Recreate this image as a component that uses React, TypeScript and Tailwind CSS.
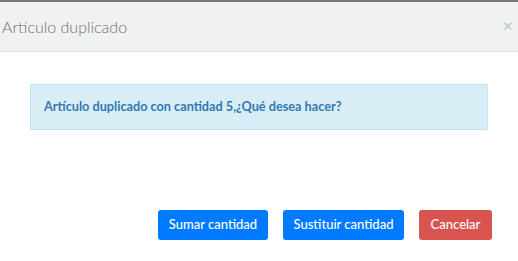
export default function App() {
  return (
    <div className="w-[518px] h-[261px] bg-white font-['Lato',sans-serif] border-t-2 border-[#7a7a7a]">
      <div className="h-[50px] bg-[#f0f1f1] border-b border-[#e2e2e2] flex items-center justify-between pl-[2px] pr-[5px]">
        <h4 className="text-[16px] font-light text-[#707070]">Artículo duplicado</h4>
        <span className="text-[18px] leading-none text-[#b9c4cf] -mt-[4px]">×</span>
      </div>
      <div className="px-[29px] pt-[32px]">
        <div className="h-[46px] bg-[#d9edf7] border border-[#bce8f1] flex items-center pl-[13px] mx-[1px]">
          <p className="text-[12.7px] font-bold text-[#3079b3]">Artículo duplicado con cantidad 5,¿Qué desea hacer?</p>
        </div>
      </div>
      <div className="flex justify-end gap-[15px] pr-[26px] pt-[80px]">
        <button className="h-[30px] w-[110px] rounded-[3px] bg-[#007bff] text-white text-[13px] font-medium">Sumar cantidad</button>
        <button className="h-[30px] w-[121px] rounded-[3px] bg-[#007bff] text-white text-[13px] font-medium">Sustituir cantidad</button>
        <button className="h-[30px] w-[73px] rounded-[3px] bg-[#d9534f] text-white text-[13px] font-medium">Cancelar</button>
      </div>
    </div>
  )
}
